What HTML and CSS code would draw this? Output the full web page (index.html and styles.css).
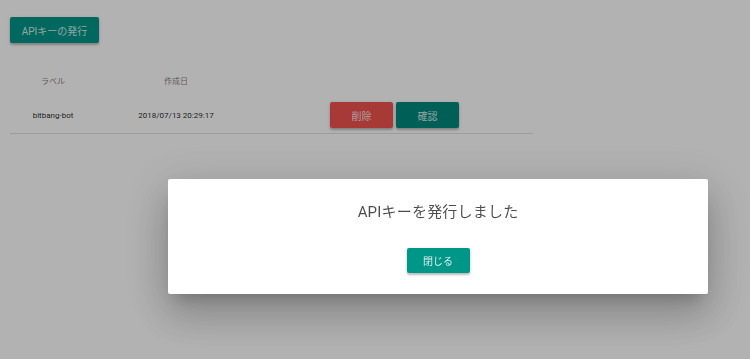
FILE: index.html
```html
<!DOCTYPE html>
<html lang="ja">
<head>
  <meta charset="UTF-8">
  <meta name="viewport" content="width=device-width, initial-scale=1.0">
  <title>APIキー</title>
  <link rel="stylesheet" href="styles.css">
</head>
<body>
  <div class="page">
    <button class="btn btn-teal btn-issue">APIキーの発行</button>

    <div class="table">
      <div class="row head">
        <div class="cell col-label">ラベル</div>
        <div class="cell col-date">作成日</div>
        <div class="cell col-actions"></div>
      </div>
      <div class="row body-row">
        <div class="cell col-label">bitbang-bot</div>
        <div class="cell col-date">2018/07/13 20:29:17</div>
        <div class="cell col-actions">
          <button class="btn btn-red btn-small">削除</button>
          <button class="btn btn-dark-teal btn-small">確認</button>
        </div>
      </div>
    </div>
  </div>

  <div class="overlay"></div>

  <div class="dialog-layer">
    <div class="dialog">
      <h2 class="dialog-title">APIキーを発行しました</h2>
      <button class="btn btn-teal btn-close">閉じる</button>
    </div>
  </div>
</body>
</html>
```

FILE: styles.css
```css
* {
  box-sizing: border-box;
  margin: 0;
  padding: 0;
}

body {
  font-family: Roboto, "Noto Sans CJK JP", sans-serif;
  background-color: #ffffff;
  color: rgba(0, 0, 0, 0.87);
  width: 750px;
  height: 359px;
  overflow: hidden;
}

.page {
  padding: 17px 10px 0 10px;
}

.btn {
  border: none;
  border-radius: 2px;
  color: rgba(255, 255, 255, 0.85);
  font-family: Roboto, "Noto Sans CJK JP", sans-serif;
  font-size: 10px;
  cursor: pointer;
  box-shadow: 0 2px 2px rgba(0, 0, 0, 0.2), 0 1px 4px rgba(0, 0, 0, 0.12);
}

.btn-teal {
  background-color: #009688;
}

.btn-dark-teal {
  background-color: #00897b;
}

.btn-red {
  background-color: #ef5350;
}

.btn-issue {
  display: block;
  width: 89px;
  height: 26px;
}

.table {
  width: 523px;
  margin-top: 19px;
}

.row {
  display: flex;
  align-items: center;
}

.head {
  height: 36px;
  font-size: 8px;
  color: rgba(0, 0, 0, 0.54);
}

.body-row {
  height: 36px;
  font-size: 8px;
  border-bottom: 1px solid rgba(0, 0, 0, 0.12);
  padding-bottom: 1px;
}

.cell {
  text-align: center;
}

.col-label {
  width: 86px;
}

.col-date {
  width: 160px;
}

.col-actions {
  flex: 1;
  display: flex;
  justify-content: center;
  gap: 3px;
}

.btn-small {
  width: 63px;
  height: 26px;
}

.overlay {
  position: fixed;
  inset: 0;
  background-color: rgba(0, 0, 0, 0.3);
}

.dialog-layer {
  position: fixed;
  inset: 0;
  padding: 179px 0 0 168px;
}

.dialog {
  width: 540px;
  height: 115px;
  background-color: #ffffff;
  border-radius: 2px;
  box-shadow: 0 11px 15px -7px rgba(0, 0, 0, 0.2), 0 24px 38px 3px rgba(0, 0, 0, 0.14), 0 9px 46px 8px rgba(0, 0, 0, 0.12);
  display: flex;
  flex-direction: column;
  align-items: center;
  padding-top: 23px;
}

.dialog-title {
  font-size: 15px;
  font-weight: 400;
  letter-spacing: 0.2px;
  color: rgba(0, 0, 0, 0.7);
  line-height: 20px;
}

.btn-close {
  width: 63px;
  height: 25px;
  margin-top: 26px;
}
```
